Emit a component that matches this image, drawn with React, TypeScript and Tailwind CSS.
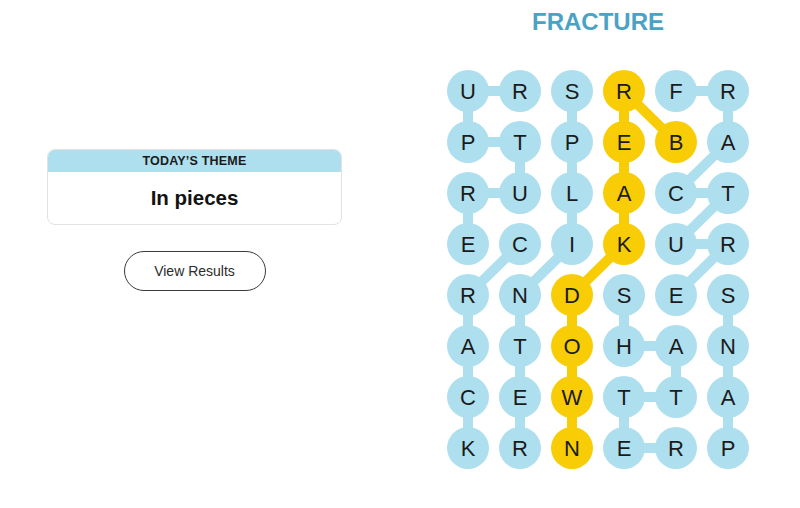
import React from 'react';

const BLUE = '#aedfee';
const YELLOW = '#f8cd05';

const letters = [
  'URSRFR',
  'PTPEBA',
  'RULACT',
  'ECIKUR',
  'RNDSES',
  'ATOHAN',
  'CETTTA',
  'KRNERP',
];

// found words as paths of [col, row]
const words: { path: [number, number][]; spangram?: boolean }[] = [
  { path: [[1, 0], [0, 0], [0, 1], [1, 1], [1, 2], [0, 2], [0, 3]] }, // RUPTURE
  { path: [[2, 0], [2, 1], [2, 2], [2, 3], [1, 4], [1, 5], [1, 6], [1, 7]] }, // SPLINTER
  { path: [[1, 3], [0, 4], [0, 5], [0, 6], [0, 7]] }, // CRACK
  { path: [[4, 0], [5, 0], [5, 1], [4, 2], [5, 2], [4, 3], [5, 3], [4, 4]] }, // FRACTURE
  { path: [[3, 4], [3, 5], [4, 5], [4, 6], [3, 6], [3, 7], [4, 7]] }, // SHATTER
  { path: [[5, 4], [5, 5], [5, 6], [5, 7]] }, // SNAP
  { path: [[4, 1], [3, 0], [3, 1], [3, 2], [3, 3], [2, 4], [2, 5], [2, 6], [2, 7]], spangram: true }, // BREAKDOWN
];

// fix row 6 letters
letters[6] = 'CEWTTA';

const CELL = 42;
const COL = 52;
const ROW = 51;

const cx = (c: number) => CELL / 2 + c * COL;
const cy = (r: number) => CELL / 2 + r * ROW;

function isSpangram(c: number, r: number) {
  return words.some((w) => w.spangram && w.path.some(([pc, pr]) => pc === c && pr === r));
}

function Board() {
  return (
    <div className="relative w-[302px] h-[399px]">
      {/* connectors */}
      <svg className="absolute inset-0" width={302} height={399}>
        {words.map((w, i) => (
          <polyline
            key={i}
            points={w.path.map(([c, r]) => `${cx(c)},${cy(r)}`).join(' ')}
            fill="none"
            stroke={w.spangram ? YELLOW : BLUE}
            strokeWidth={10}
            strokeLinejoin="round"
          />
        ))}
      </svg>

      <div className="relative grid grid-cols-[repeat(6,42px)] gap-x-[10px] gap-y-[9px]">
        {letters.map((row, r) =>
          row.split('').map((ch, c) => (
            <div
              key={`${r}-${c}`}
              className={`w-[42px] h-[42px] rounded-full flex items-center justify-center text-[22px] text-[#1b1b1b] ${
                isSpangram(c, r) ? 'bg-[#f8cd05]' : 'bg-[#aedfee]'
              }`}
            >
              {ch}
            </div>
          )),
        )}
      </div>
    </div>
  );
}

export default function App() {
  return (
    <div className="w-[800px] h-[508px] bg-white flex font-['Liberation_Sans',Arial,sans-serif]">
      {/* Left: theme card */}
      <div className="pl-[47px] pt-[149px] w-[342px] shrink-0">
        <div className="w-[295px] h-[76px] rounded-lg border border-[#e2e2e2] overflow-hidden flex flex-col">
          <div className="h-[22px] bg-[#aedfee] flex items-center justify-center text-[12.5px] font-bold text-[#1b1b1b] tracking-[0.2px]">
            TODAY’S THEME
          </div>
          <div className="flex-1 flex items-center justify-center text-[20.5px] font-bold text-[#121212]">
            In pieces
          </div>
        </div>
        <div className="w-[295px] flex justify-center mt-[26px]">
          <button className="w-[142px] h-[40px] rounded-full border border-[#3a3a3a] text-[14px] text-[#2b2b2b] bg-white">
            View Results
          </button>
        </div>
      </div>

      {/* Right: board */}
      <div className="ml-[105px] w-[302px] shrink-0 pt-[8px]">
        <h1 className="text-center text-[24px] leading-[28px] font-bold text-[#4aa3c5]">FRACTURE</h1>
        <div className="mt-[34px]">
          <Board />
        </div>
      </div>
    </div>
  );
}
